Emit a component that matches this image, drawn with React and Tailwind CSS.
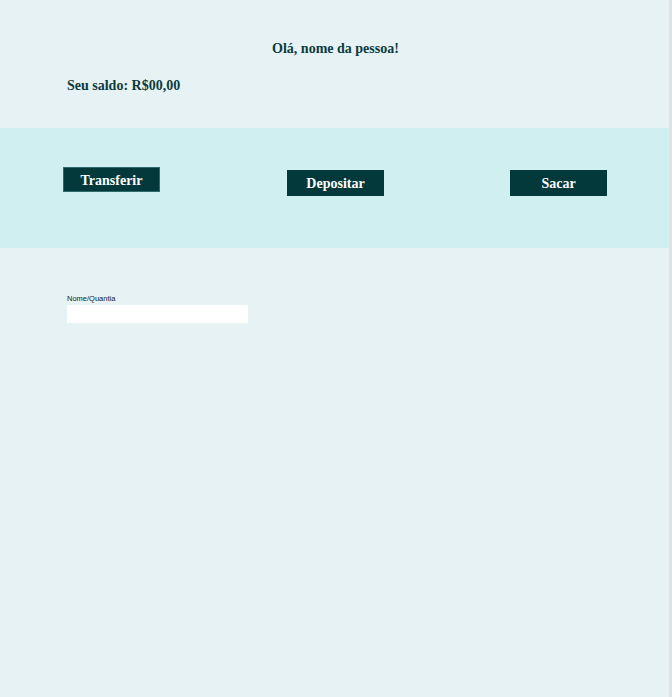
export default function App() {
  const serif = { fontFamily: '"Liberation Serif", serif' };
  return (
    <div className="w-[672px] h-[697px] bg-[#e6f2f3] border-r-[3px] border-[#dde3e4] overflow-hidden">
      <div className="w-[669px] h-[697px] flex flex-col">
        <div className="h-[128px] flex flex-col">
          <h1
            className="mt-[39px] ml-[2px] text-center text-[14px] leading-[20px] font-bold text-[#0d3b3e]"
            style={serif}
          >
            Olá, nome da pessoa!
          </h1>
          <p
            className="mt-[17px] ml-[67px] text-[14px] leading-[20px] font-bold text-[#0d3b3e]"
            style={serif}
          >
            Seu saldo: R$00,00
          </p>
        </div>
        <div className="h-[120px] bg-[#cfeff1] flex items-start">
          <button
            className="mt-[39px] ml-[63px] w-[97px] h-[25px] pt-[2px] bg-[#03393b] border border-[#2f6a6c] text-white font-bold text-[14px] leading-none"
            style={serif}
          >
            Transferir
          </button>
          <button
            className="mt-[42px] ml-[127px] w-[97px] h-[26px] pt-[2px] bg-[#03393b] text-white font-bold text-[14px] leading-none"
            style={serif}
          >
            Depositar
          </button>
          <button
            className="mt-[42px] ml-[126px] w-[97px] h-[26px] pt-[2px] bg-[#03393b] text-white font-bold text-[14px] leading-none"
            style={serif}
          >
            Sacar
          </button>
        </div>
        <div className="flex flex-col ml-[67px] mt-[46px]">
          <label
            className="text-[7.5px] leading-[10px] text-[#222222]"
            style={{ fontFamily: '"Liberation Sans", sans-serif' }}
          >
            Nome/Quantia
          </label>
          <input className="mt-[1px] w-[181px] h-[18px] bg-white outline-none" />
        </div>
      </div>
    </div>
  );
}
